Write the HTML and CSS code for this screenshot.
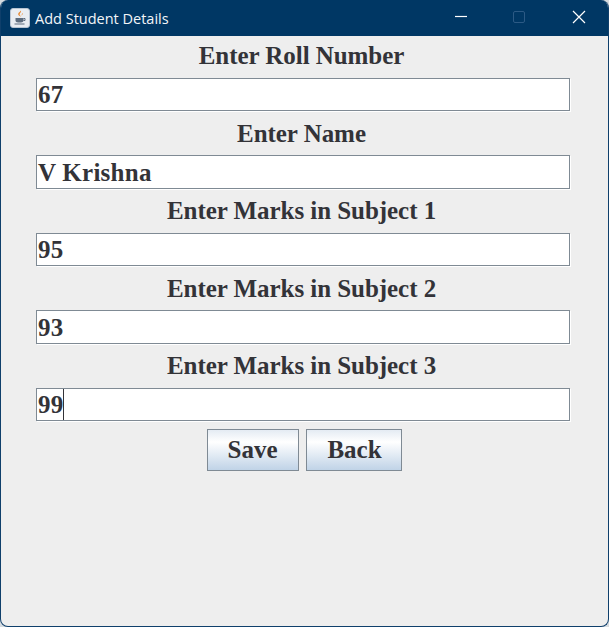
FILE: index.html
```html
<!DOCTYPE html>
<html lang="en">
<head>
    <meta charset="UTF-8">
    <meta name="viewport" content="width=device-width, initial-scale=1.0">
    <title>Add Student Details</title>
    <link rel="stylesheet" href="styles.css">
</head>
<body>
    <div class="window">
        <div class="titlebar">
            <svg class="app-icon" width="20" height="20" viewBox="0 0 20 20">
                <rect x="0.5" y="0.5" width="19" height="19" rx="2.5" fill="#e9edf2" stroke="#b8c4d2"/>
                <path d="M10.5 2.500c1.700 1.800-1.800 2.800-.6 4.700.4.600 1 .9 1.200 1.500-2-.6-3.600-1.800-2.700-3.400C9 4.200 10.400 3.600 10.500 2.500z" fill="#e8862c"/>
                <path d="M12.800 5c.3 1.200-1.100 1.800-.8 3-.7-1.200 0-2.300.8-3z" fill="#e8862c"/>
                <path d="M5.500 10h8v2.500c0 1.300-1.200 2-2.500 2H8c-1.300 0-2.500-.7-2.500-2z" fill="#5f6d7e"/>
                <path d="M13.500 10.500h1.500v2h-1.500" fill="none" stroke="#5f6d7e"/>
                <path d="M4.500 16h10" stroke="#5f6d7e" stroke-width="1.200"/>
            </svg>
            <span class="title">Add Student Details</span>
            <div class="controls">
                <svg width="46" height="36" viewBox="0 0 46 36"><path d="M17 16.500h12" stroke="#fff" stroke-width="1.200"/></svg>
                <svg width="46" height="36" viewBox="0 0 46 36"><rect x="16.500" y="11.500" width="11" height="11" rx="1.500" fill="none" stroke="#2c5a85"/></svg>
                <svg width="46" height="36" viewBox="0 0 46 36"><path d="M17 11l12 12M29 11l-12 12" stroke="#fff" stroke-width="1.200"/></svg>
            </div>
        </div>

        <div class="content">
            <div class="form-row">
                <div class="form-label">Enter Roll Number</div>
                <div class="text-field">67</div>
            </div>
            <div class="form-row">
                <div class="form-label">Enter Name</div>
                <div class="text-field">V Krishna</div>
            </div>
            <div class="form-row">
                <div class="form-label">Enter Marks in Subject 1</div>
                <div class="text-field">95</div>
            </div>
            <div class="form-row">
                <div class="form-label">Enter Marks in Subject 2</div>
                <div class="text-field">93</div>
            </div>
            <div class="form-row">
                <div class="form-label">Enter Marks in Subject 3</div>
                <div class="text-field">99<span class="caret"></span></div>
            </div>

            <div class="buttons">
                <button type="button" class="btn btn-save">Save</button>
                <button type="button" class="btn btn-back">Back</button>
            </div>
        </div>
    </div>
</body>
</html>
```

FILE: styles.css
```css
body {
    margin: 0;
    background-color: #d5dbe0;
}

.window {
    width: 609px;
    height: 627px;
    box-sizing: border-box;
    display: flex;
    flex-direction: column;
    background-color: #eeeeee;
    border: 1px solid #0f3f6b;
    border-top: none;
    border-radius: 8px;
    overflow: hidden;
}

.titlebar {
    height: 36px;
    flex-shrink: 0;
    display: flex;
    align-items: center;
    background-color: #003764;
    margin: 0 -1px;
    padding-left: 10px;
    font-family: "Open Sans", sans-serif;
    font-size: 14.500px;
    color: #f2f5f8;
}

.app-icon {
    margin-right: 5px;
}

.controls {
    margin-left: auto;
    margin-right: 7px;
    display: flex;
    gap: 13px;
}

.content {
    display: flex;
    flex-direction: column;
    padding: 2.750px 38px 0 35px;
    font-family: "Liberation Serif", serif;
    font-weight: bold;
    font-size: 25px;
    color: #333338;
}

.form-row {
    height: 77.500px;
}

.form-label {
    height: 39px;
    box-sizing: border-box;
    padding: 0.500px 3px 0 0;
    line-height: 33px;
    letter-spacing: -0.050px;
    text-align: center;
}

.text-field {
    height: 33.500px;
    box-sizing: border-box;
    display: flex;
    align-items: center;
    padding-left: 1px;
    background-color: #fff;
    border: 1px solid #7f8a94;
    box-shadow: 1px 1px 0 #fff;
    line-height: 31px;
    letter-spacing: 0.250px;
}

.caret {
    width: 1px;
    height: 31px;
    margin-left: -1px;
    background-color: #333338;
}

.buttons {
    display: flex;
    justify-content: center;
    gap: 7px;
    margin-top: 2.750px;
    padding-left: 2px;
}

.btn {
    height: 42px;
    padding: 0;
    font-family: inherit;
    font-weight: bold;
    font-size: 25px;
    color: #333338;
    border: 1px solid #7f8a94;
    background: linear-gradient(to bottom, #e4ebf3 0%, #ffffff 30%, #c0d3e7 100%);
}

.btn-save {
    width: 92px;
}

.btn-back {
    width: 96px;
    padding-left: 2px;
}
```
